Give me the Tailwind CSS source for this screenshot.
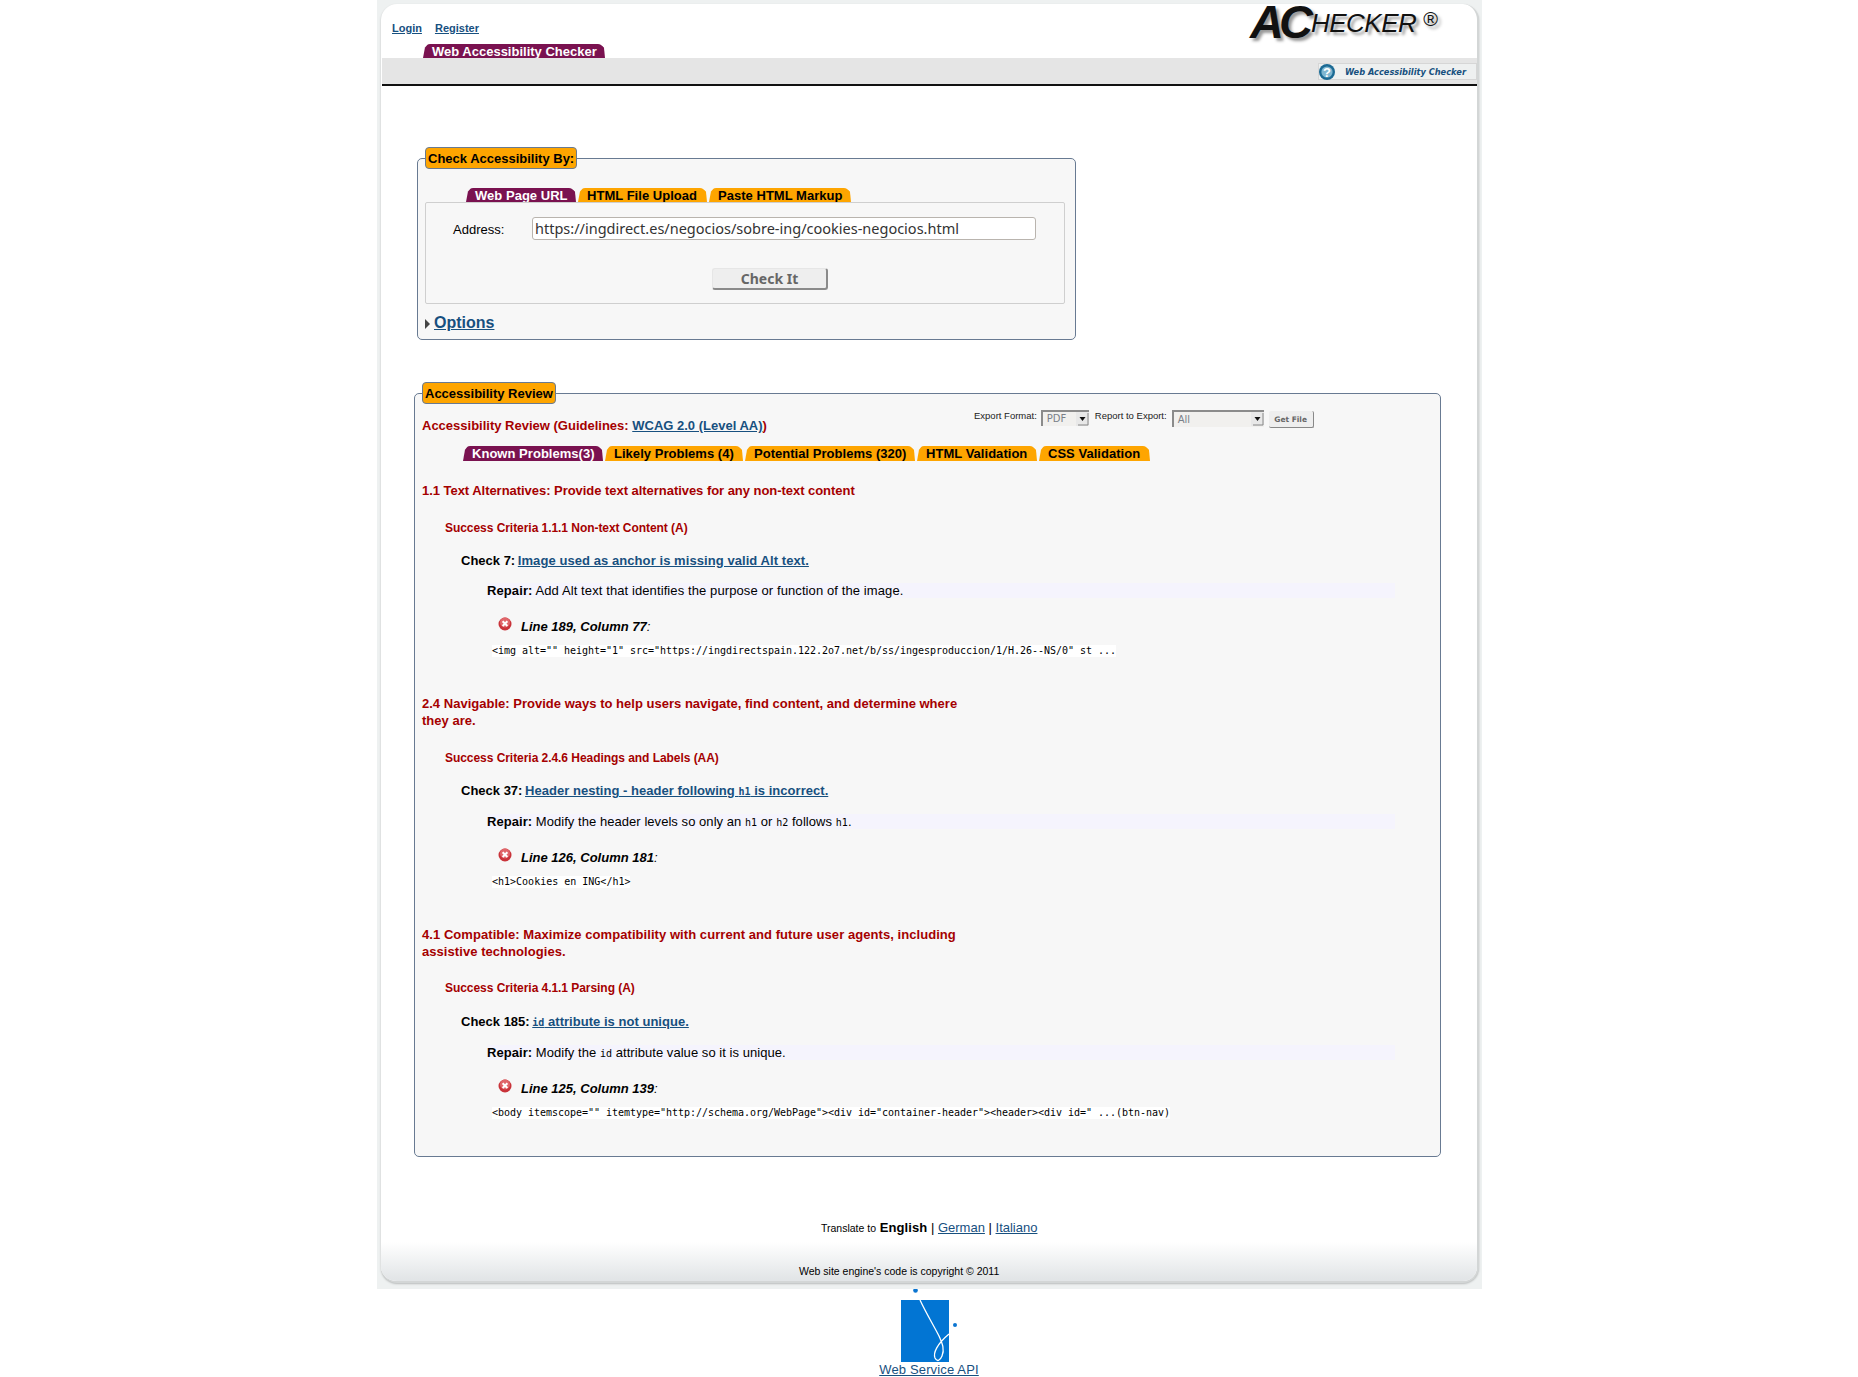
<!DOCTYPE html>
<html lang="en">
<head>
<meta charset="utf-8">
<title>Web Accessibility Checker</title>
<script src="https://cdn.jsdelivr.net/npm/@tailwindcss/browser@4"></script>
</head>
<body class="bg-white font-['Liberation_Sans',Arial,sans-serif] text-[13px] leading-[17px] text-black">
<div class="ml-[377px] w-[1105px] h-[1289px] bg-[#eef1f1] pt-[4px] pl-[4px] pr-[3px]">
  <div class="h-[1279px] rounded-[16px] bg-white flex flex-col overflow-hidden border-r-[2px] border-b-[2px] border-[#d3d6d6] shadow-[0_1px_2px_#b9bcbc]">
    <!-- header -->
    <div class="h-[54px] flex justify-between shrink-0">
      <div class="pl-[11px]">
        <div class="h-[24px] pt-[18px] flex gap-[13px] text-[11px] leading-[13px] font-bold">
          <a href="#" class="underline text-[#17507f]">Login</a>
          <a href="#" class="underline text-[#17507f]">Register</a>
        </div>
        <div class="mt-[16px] ml-[31px] w-[182px] h-[14px] bg-[#7a1250] text-white font-bold text-[13px] leading-[16px] pl-[9px] rounded-t-[7px] [clip-path:polygon(0_100%,2px_25%,5px_0,calc(100%-5px)_0,calc(100%-1px)_25%,100%_100%)]">Web Accessibility Checker</div>
      </div>
      <div class="mr-[35px] w-[192px] h-[42px] flex items-start italic text-[#111] [text-shadow:3px_3px_3px_#999]">
        <span class="font-bold text-[47px] leading-[42px] tracking-[-5px] -mt-[3px]">AC</span>
        <span class="text-[26px] leading-[28px] mt-[5px] ml-[3px] tracking-[-0.5px]">HECKER</span>
        <span class="not-italic text-[20px] leading-[20px] mt-[5px] ml-[7px] font-normal">®</span>
      </div>
    </div>
    <div class="h-[28px] ml-[1px] bg-[#e5e5e5] border-b-[2px] border-[#111] flex justify-end pt-[5px] shrink-0">
      <div class="w-[159px] h-[17px] bg-[#eef0f0] border border-[#d6d6d6] flex items-center">
        <svg width="16" height="16" viewBox="0 0 16 16" class="shrink-0">
          <circle cx="8" cy="8" r="8" fill="#1b6a94"/>
          <circle cx="8" cy="8" r="5.600" fill="#7fb6d0"/>
          <text x="8" y="12.500" text-anchor="middle" font-size="13" font-weight="700" font-family="Liberation Sans" fill="#fff">?</text>
        </svg>
        <span class="ml-[10px] text-[8.25px] leading-[12px] font-bold italic text-[#17507f] font-['DejaVu_Sans',sans-serif] whitespace-nowrap">Web Accessibility Checker</span>
      </div>
    </div>

    <!-- Check Accessibility By -->
    <div class="mt-[72px] ml-[36px] w-[659px] h-[182px] border border-[#687a92] rounded-[5px] bg-[#f7f7f7] shrink-0">
      <div class="-mt-[12px] ml-[7px] w-[152px] h-[22px] bg-[#fea500] border border-[#687a92] rounded-[4px] font-bold text-[13px] leading-[22px] pl-[2px] whitespace-nowrap">Check Accessibility By:</div>
      <div class="mt-[19px] ml-[48px] flex gap-[2px] h-[14px] font-bold leading-[16px] tracking-[0.03px]">
        <div class="w-[110px] bg-[#7a1250] text-white pl-[9px] rounded-t-[7px] [clip-path:polygon(0_100%,2px_25%,5px_0,calc(100%-5px)_0,calc(100%-1px)_25%,100%_100%)]">Web Page URL</div>
        <div class="w-[129px] bg-[#fea500] pl-[9px] rounded-t-[7px] [clip-path:polygon(0_100%,2px_25%,5px_0,calc(100%-5px)_0,calc(100%-1px)_25%,100%_100%)]">HTML File Upload</div>
        <div class="w-[142px] bg-[#fea500] pl-[9px] rounded-t-[7px] [clip-path:polygon(0_100%,2px_25%,5px_0,calc(100%-5px)_0,calc(100%-1px)_25%,100%_100%)]">Paste HTML Markup</div>
      </div>
      <div class="ml-[7px] w-[640px] h-[102px] border border-[#cfcfcf] rounded-[2px]">
        <div class="flex mt-[14px]">
          <label class="ml-[27px] w-[79px] pt-[3px] leading-[20px] shrink-0">Address:</label>
          <div class="w-[504px] shrink-0 h-[23px] bg-white border border-[#b9b4ae] rounded-[3px] pl-[2px] font-['Noto_Sans',sans-serif] text-[14.5px] leading-[21px] text-[#333] whitespace-nowrap overflow-hidden">https://ingdirect.es/negocios/sobre-ing/cookies-negocios.html</div>
        </div>
        <div class="mt-[28px] ml-[286px] w-[116px] h-[22px] bg-[#eeeeee] border-r-[2px] border-b-[2px] border-t border-l border-t-[#e6e6e6] border-l-[#e6e6e6] border-r-[#8a8a8a] border-b-[#8a8a8a] rounded-[3px] text-center font-['Noto_Sans',sans-serif] font-bold text-[14px] leading-[20px] text-[#666]">Check It</div>
      </div>
      <div class="mt-[8px] ml-[7px] flex items-center h-[22px]">
        <svg width="5" height="10" viewBox="0 0 5 10" class="mt-[2px]"><path d="M0 0L5 5L0 10Z" fill="#444"/></svg>
        <a href="#" class="ml-[4px] underline text-[#17507f] font-bold text-[16px] leading-[20px]">Options</a>
      </div>
    </div>

    <!-- Accessibility Review -->
    <div class="mt-[53px] ml-[33px] w-[1027px] h-[764px] border border-[#687a92] rounded-[5px] bg-[#f7f7f7] shrink-0">
      <div class="flex">
        <div class="w-[480px] shrink-0">
          <div class="-mt-[12px] ml-[7px] w-[134px] h-[22px] bg-[#fea500] border border-[#687a92] rounded-[4px] font-bold leading-[22px] pl-[2px] whitespace-nowrap">Accessibility Review</div>
          <div class="mt-[13px] ml-[7px] font-bold text-[#a50000] whitespace-nowrap">Accessibility Review (Guidelines: <a href="#" class="underline text-[#17507f]">WCAG 2.0 (Level AA)</a>)</div>
        </div>
        <div class="mt-[16px] ml-[79px] flex items-start text-[9.5px] leading-[12px] text-[#222] h-[17px]">
          <span class="whitespace-nowrap">Export Format:</span>
          <div class="ml-[4px] w-[48px] h-[16px] bg-[#f1f0ee] border-l-[2px] border-t-[2px] border-[#8b8b8b] flex justify-between">
            <span class="pl-[4px] text-[#7a8088] leading-[14px] text-[10px] font-['DejaVu_Sans',sans-serif]">PDF</span>
            <svg width="13" height="14" viewBox="0 0 13 14"><rect width="13" height="14" fill="#e8e8e8"/><path d="M2 13H12V1" stroke="#888" fill="none"/><path d="M3.500 5h6l-3 4z" fill="#111"/></svg>
          </div>
          <span class="ml-[6px] whitespace-nowrap">Report to Export:</span>
          <div class="ml-[5px] w-[92px] h-[17px] bg-[#f1f0ee] border-l-[2px] border-t-[2px] border-[#8b8b8b] flex justify-between">
            <span class="pl-[4px] text-[#7a8088] leading-[15px] text-[10px] font-['DejaVu_Sans',sans-serif]">All</span>
            <svg width="13" height="14" viewBox="0 0 13 14"><rect width="13" height="14" fill="#e8e8e8"/><path d="M2 13H12V1" stroke="#888" fill="none"/><path d="M3.500 5h6l-3 4z" fill="#111"/></svg>
          </div>
          <div class="ml-[5px] mt-[1px] w-[45px] h-[17px] bg-[#eeeeee] border-r border-b border-[#888] border-l-[#e3e3e3] border-t-[#e3e3e3] rounded-[2px] text-center font-['DejaVu_Sans',sans-serif] font-bold text-[7.5px] leading-[17px] text-[#666]">Get File</div>
        </div>
      </div>
      <div class="mt-[12px] ml-[48px] flex gap-[2px] h-[15px] font-bold leading-[15px] tracking-[0.03px]">
        <div class="w-[140px] bg-[#7a1250] text-white pl-[9px] rounded-t-[7px] whitespace-nowrap [clip-path:polygon(0_100%,2px_25%,5px_0,calc(100%-5px)_0,calc(100%-1px)_25%,100%_100%)]">Known Problems(3)</div>
        <div class="w-[138px] bg-[#fea500] pl-[9px] rounded-t-[7px] whitespace-nowrap [clip-path:polygon(0_100%,2px_25%,5px_0,calc(100%-5px)_0,calc(100%-1px)_25%,100%_100%)]">Likely Problems (4)</div>
        <div class="w-[170px] bg-[#fea500] pl-[9px] rounded-t-[7px] whitespace-nowrap [clip-path:polygon(0_100%,2px_25%,5px_0,calc(100%-5px)_0,calc(100%-1px)_25%,100%_100%)]">Potential Problems (320)</div>
        <div class="w-[120px] bg-[#fea500] pl-[9px] rounded-t-[7px] whitespace-nowrap [clip-path:polygon(0_100%,2px_25%,5px_0,calc(100%-5px)_0,calc(100%-1px)_25%,100%_100%)]">HTML Validation</div>
        <div class="w-[111px] bg-[#fea500] pl-[9px] rounded-t-[7px] whitespace-nowrap [clip-path:polygon(0_100%,2px_25%,5px_0,calc(100%-5px)_0,calc(100%-1px)_25%,100%_100%)]">CSS Validation</div>
      </div>

      <!-- 1.1 -->
      <div class="mt-[21px] ml-[7px] w-[560px] font-bold text-[#a50000] tracking-[-0.04px]">1.1 Text Alternatives: Provide text alternatives for any non-text content</div>
      <div class="mt-[22px] ml-[30px] font-bold text-[#a50000] text-[12px] leading-[15px] tracking-[-0.05px]">Success Criteria 1.1.1 Non-text Content (A)</div>
      <div class="mt-[16px] ml-[46px] font-bold">Check 7: <a href="#" class="-ml-[1px] underline text-[#17507f] tracking-[0.07px]">Image used as anchor is missing valid Alt text.</a></div>
      <div class="mt-[14px] ml-[72px] w-[908px] h-[15px] bg-[#f5f4fd] leading-[15px] tracking-[0.1px]"><b>Repair:</b> Add Alt text that identifies the purpose or function of the image.</div>
      <div class="mt-[20px] ml-[83px] flex h-[17px]">
        <svg width="14" height="14" viewBox="0 0 14 14" class="-mt-[1px]"><circle cx="7" cy="7" r="6.500" fill="#c9333a"/><circle cx="7" cy="5.500" r="5" fill="#e0666a"/><path d="M4.600 4.200L9.400 9M9.400 4.200L4.600 9" stroke="#fff" stroke-width="2"/></svg>
        <span class="ml-[9px]"><b><i>Line 189, Column 77</i></b><i>:</i></span>
      </div>
      <div class="mt-[10px] ml-[77px] w-fit h-[12px] bg-white font-['DejaVu_Sans_Mono',monospace] text-[10px] leading-[12px] tracking-[-0.02px] whitespace-pre">&lt;img alt="" height="1" src="https://ingdirectspain.122.2o7.net/b/ss/ingesproduccion/1/H.26--NS/0" st ...</div>

      <!-- 2.4 -->
      <div class="mt-[38px] ml-[7px] w-[560px] font-bold text-[#a50000] tracking-[0.015px]">2.4 Navigable: Provide ways to help users navigate, find content, and determine where they are.</div>
      <div class="mt-[22px] ml-[30px] font-bold text-[#a50000] text-[12px] leading-[15px] tracking-[-0.05px]">Success Criteria 2.4.6 Headings and Labels (AA)</div>
      <div class="mt-[16px] ml-[46px] font-bold">Check 37: <a href="#" class="-ml-[1px] underline text-[#17507f] tracking-[0.03px]">Header nesting - header following <code class="font-['DejaVu_Sans_Mono',monospace] text-[10px]">h1</code> is incorrect.</a></div>
      <div class="mt-[14px] ml-[72px] w-[908px] h-[15px] bg-[#f5f4fd] leading-[15px] tracking-[0.05px]"><b>Repair:</b> Modify the header levels so only an <code class="font-['DejaVu_Sans_Mono',monospace] text-[10px]">h1</code> or <code class="font-['DejaVu_Sans_Mono',monospace] text-[10px]">h2</code> follows <code class="font-['DejaVu_Sans_Mono',monospace] text-[10px]">h1</code>.</div>
      <div class="mt-[20px] ml-[83px] flex h-[17px]">
        <svg width="14" height="14" viewBox="0 0 14 14" class="-mt-[1px]"><circle cx="7" cy="7" r="6.500" fill="#c9333a"/><circle cx="7" cy="5.500" r="5" fill="#e0666a"/><path d="M4.600 4.200L9.400 9M9.400 4.200L4.600 9" stroke="#fff" stroke-width="2"/></svg>
        <span class="ml-[9px]"><b><i>Line 126, Column 181</i></b><i>:</i></span>
      </div>
      <div class="mt-[10px] ml-[77px] w-fit h-[12px] bg-white font-['DejaVu_Sans_Mono',monospace] text-[10px] leading-[12px] whitespace-pre">&lt;h1&gt;Cookies en ING&lt;/h1&gt;</div>

      <!-- 4.1 -->
      <div class="mt-[38px] ml-[7px] w-[560px] font-bold text-[#a50000] tracking-[0.06px]">4.1 Compatible: Maximize compatibility with current and future user agents, including assistive technologies.</div>
      <div class="mt-[21px] ml-[30px] font-bold text-[#a50000] text-[12px] leading-[15px] tracking-[-0.05px]">Success Criteria 4.1.1 Parsing (A)</div>
      <div class="mt-[17px] ml-[46px] font-bold">Check 185: <a href="#" class="-ml-[1px] underline text-[#17507f] tracking-[0.03px]"><code class="font-['DejaVu_Sans_Mono',monospace] text-[10px]">id</code> attribute is not unique.</a></div>
      <div class="mt-[14px] ml-[72px] w-[908px] h-[15px] bg-[#f5f4fd] leading-[15px] tracking-[0.05px]"><b>Repair:</b> Modify the <code class="font-['DejaVu_Sans_Mono',monospace] text-[10px]">id</code> attribute value so it is unique.</div>
      <div class="mt-[20px] ml-[83px] flex h-[17px]">
        <svg width="14" height="14" viewBox="0 0 14 14" class="-mt-[1px]"><circle cx="7" cy="7" r="6.500" fill="#c9333a"/><circle cx="7" cy="5.500" r="5" fill="#e0666a"/><path d="M4.600 4.200L9.400 9M9.400 4.200L4.600 9" stroke="#fff" stroke-width="2"/></svg>
        <span class="ml-[9px]"><b><i>Line 125, Column 139</i></b><i>:</i></span>
      </div>
      <div class="mt-[10px] ml-[77px] w-fit h-[12px] bg-white font-['DejaVu_Sans_Mono',monospace] text-[10px] leading-[12px] tracking-[-0.02px] whitespace-pre">&lt;body itemscope="" itemtype="http://schema.org/WebPage"&gt;&lt;div id="container-header"&gt;&lt;header&gt;&lt;div id=" ...(btn-nav)</div>
    </div>

    <!-- footer -->
    <div class="grow flex flex-col bg-[linear-gradient(to_bottom,#ffffff_0px,#ffffff_85px,#e2e5e7_122px)]">
      <div class="mt-[62px] ml-[440px] whitespace-nowrap"><span class="text-[10.5px]">Translate to</span> <b class="tracking-[0.1px]">English</b> | <a href="#" class="underline text-[#17507f]">German</a> | <a href="#" class="underline text-[#17507f]">Italiano</a></div>
      <div class="mt-[28px] ml-[418px] text-[10.5px] leading-[12px] whitespace-nowrap">Web site engine's code is copyright © 2011</div>
    </div>
  </div>
</div>

<div class="flex flex-col items-center ml-[377px] w-[1105px] h-[88px]">
  <svg width="75" height="74" viewBox="0 0 75 74" class="shrink-0 ml-[-5px]">
    <circle cx="25.500" cy="1.500" r="2.300" fill="#0b75d1"/>
    <rect x="11" y="11" width="48" height="62" fill="#0275d3"/>
    <circle cx="65" cy="36" r="2" fill="#0b75d1"/>
    <path d="M30 11C36 24 44 37 49 47C52 54 55 60 52 67C50 72 47 73 45 69C43 64 47 55 59 45" fill="none" stroke="#fff" stroke-width="1.300"/>
  </svg>
  <a href="#" class="-mt-[1px] underline text-[#17507f] leading-[15px] ml-[-1px] tracking-[0.15px]">Web Service API</a>
</div>
</body>
</html>
